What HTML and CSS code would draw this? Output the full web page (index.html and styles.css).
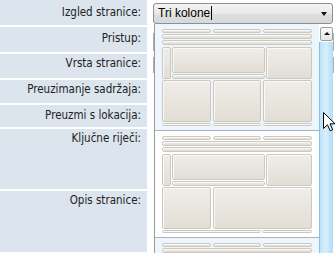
FILE: index.html
```html
<!DOCTYPE html>
<html lang="hr">
<head>
    <meta charset="UTF-8">
    <title>Postavke stranice</title>
    <link rel="stylesheet" href="styles.css">
</head>
<body>
<div class="page">
    <div class="form">
        <div class="label r1">Izgled stranice:</div>
        <div class="field">
            <div class="select">Tri kolone<span class="caret"></span><span class="drop"></span></div>
        </div>

        <div class="label r2">Pristup:</div>
        <div class="field"><div class="input in2"></div></div>

        <div class="label r3">Vrsta stranice:</div>
        <div class="field"><div class="input in3"></div></div>

        <div class="label r4">Preuzimanje sadržaja:</div>
        <div class="field"></div>

        <div class="label r5">Preuzmi s lokacija:</div>
        <div class="field"></div>

        <div class="label r6">Ključne riječi:</div>
        <div class="field"></div>

        <div class="label r7">Opis stranice:</div>
        <div class="field"></div>
    </div>

    <!-- otvoreni popis izgleda -->
    <div class="popup">
        <div class="list">
            <div class="opt hi">
                <div class="thumb">
                    <div class="cols3 hdr"><div class="b"></div><div class="b"></div><div class="b"></div></div>
                    <div class="b bar"></div>
                    <div class="b bar"></div>
                    <div class="top">
                        <div class="b"></div>
                        <div class="mid"><div class="b grow"></div><div class="b bar"></div></div>
                        <div class="b"></div>
                    </div>
                    <div class="cols3 main"><div class="b"></div><div class="b"></div><div class="b"></div></div>
                    <div class="cols3 foot"><div class="b"></div><div class="b"></div><div class="b"></div></div>
                </div>
            </div>
            <div class="opt">
                <div class="thumb">
                    <div class="cols3 hdr"><div class="b"></div><div class="b"></div><div class="b"></div></div>
                    <div class="b bar"></div>
                    <div class="b bar"></div>
                    <div class="top">
                        <div class="b"></div>
                        <div class="mid"><div class="b grow"></div><div class="b bar"></div></div>
                        <div class="b"></div>
                    </div>
                    <div class="cols2 main"><div class="b"></div><div class="b"></div></div>
                    <div class="cols2r foot"><div class="b"></div><div class="b"></div></div>
                </div>
            </div>
            <div class="opt hi">
                <div class="thumb">
                    <div class="cols3 hdr"><div class="b"></div><div class="b"></div><div class="b"></div></div>
                    <div class="b bar"></div>
                    <div class="b bar"></div>
                </div>
            </div>
        </div>
        <div class="scroll">
            <div class="up"></div>
            <div class="knob"></div>
        </div>
    </div>

    <svg class="pointer" width="13" height="20" viewBox="0 0 13 20">
        <path d="M0.5 0.5 L0.5 16.5 L4.5 12.8 L7.2 18.8 L9.6 17.8 L7 11.8 L12 11.8 Z" fill="#fff" stroke="#000" stroke-width="1" stroke-linejoin="miter"/>
    </svg>
</div>
</body>
</html>
```

FILE: styles.css
```css
html, body { margin: 0; padding: 0; background: #fff; }
body { font-family: "DejaVu Sans Condensed", "DejaVu Sans", sans-serif; font-size: 11.5px; color: #222; }
.page { position: relative; width: 336px; height: 253px; overflow: hidden; }

.form { display: grid; grid-template-columns: 147px 1fr; grid-template-rows: 25px 25px 24px 23px 22px 60px 61px; row-gap: 2px; }
.label { background: #dce4ed; text-align: right; padding: 2px 6px 0 0; line-height: 14px; }
.label.r1 { padding-top: 5px; }
.label.r2 { padding-top: 4px; }
.label.r5 { padding-top: 3px; }
.field { padding: 3px 0 0 6px; }

.select { position: relative; box-sizing: border-box; width: 180px; height: 21px; border: 1px solid #8e8f8f; border-radius: 3px;
  background: linear-gradient(#f3f3f3, #e9e9e9 50%, #dedede 51%, #d8d8d8);
  font-family: "Liberation Sans", sans-serif; font-size: 12px; color: #000; line-height: 19px; padding-left: 4px; }
.caret { display: inline-block; width: 1px; height: 14px; background: #000; vertical-align: -3px; margin-left: 1px; }
.drop { position: absolute; right: 5px; top: 8px; border-left: 3px solid transparent; border-right: 3px solid transparent; border-top: 4px solid #111; }

.input { box-sizing: border-box; width: 181px; border: 1px solid #abadb3; }
.in2 { height: 18px; margin-top: 3px; }
.in3 { height: 16px; margin-top: 0; }

.popup { position: absolute; left: 154px; top: 24px; width: 178px; bottom: 0; display: flex; border-left: 1px solid #9a9a9a; background: #fff; }
.list { flex: 1; overflow: hidden; }
.opt { padding: 5px 6px 4px 7px; border-bottom: 1px solid #aab4c0; }
.opt.hi { background: #eef6fd; }

.thumb { display: flex; flex-direction: column; gap: 1px; width: 150px; }
.b { box-sizing: border-box; background: linear-gradient(#f0ede8, #e2ded6); border: 1px solid #cdc8bf; border-radius: 2px; box-shadow: inset 1px 1px 0 #faf9f7; }
.bar { height: 5px; }
.cols3 { display: grid; grid-template-columns: 49px 48px 1fr; column-gap: 2px; }
.cols2 { display: grid; grid-template-columns: 49px 1fr; column-gap: 2px; }
.cols2r { display: grid; grid-template-columns: 99px 1fr; column-gap: 1px; }
.hdr { height: 4px; }
.top { display: grid; grid-template-columns: 9px 93px 1fr; column-gap: 1px; height: 32px; margin-top: 1px; }
.mid { display: flex; flex-direction: column; gap: 1px; }
.grow { flex: 1; }
.main { height: 42px; }
.foot { height: 3px; }

.scroll { width: 14px; display: flex; flex-direction: column; padding-top: 3px; }
.up { position: relative; height: 12px; margin: 0 0 1px 1px; border: 1px solid #9aa0a6; border-radius: 2px; background: linear-gradient(#fbfbfb, #e6e6e6); }
.up::after { content: ""; position: absolute; left: 3px; top: 4px; border-left: 3px solid transparent; border-right: 3px solid transparent; border-bottom: 3px solid #111; }
.knob { flex: 1; border-left: 1px solid #86c0e4; background: linear-gradient(90deg, #bde2f7, #d6effc 45%, #b2ddf5); }

.pointer { position: absolute; left: 323px; top: 112px; }
```
